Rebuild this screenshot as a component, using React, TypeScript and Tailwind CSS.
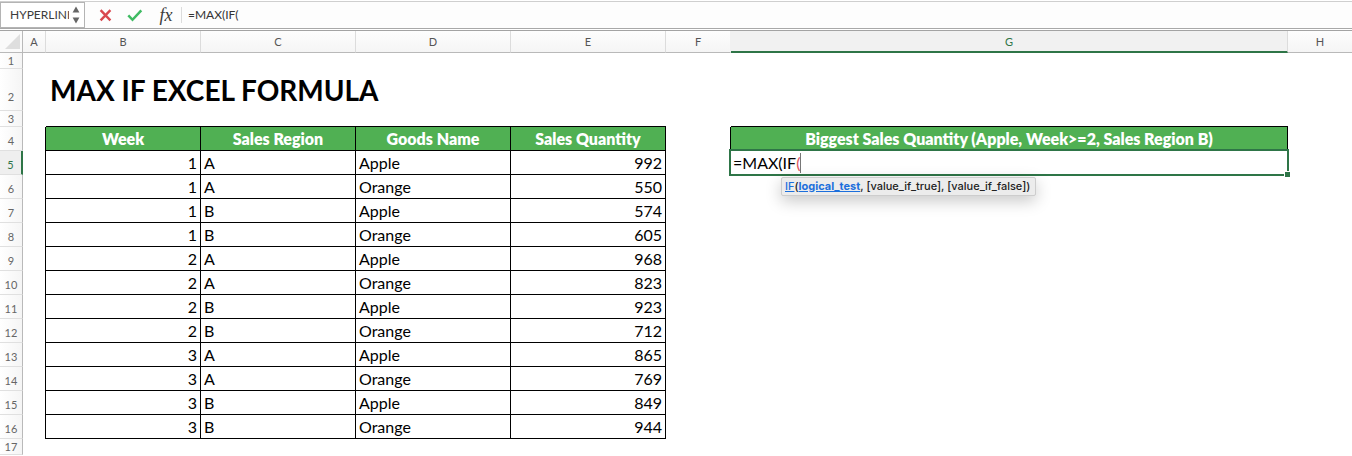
import type { ReactNode } from "react";

const columns = ["A", "B", "C", "D", "E", "F", "G", "H"];

const headings = ["Week", "Sales Region", "Goods Name", "Sales Quantity"];

const sales: [number, string, string, number][] = [
  [1, "A", "Apple", 992],
  [1, "A", "Orange", 550],
  [1, "B", "Apple", 574],
  [1, "B", "Orange", 605],
  [2, "A", "Apple", 968],
  [2, "A", "Orange", 823],
  [2, "B", "Apple", 923],
  [2, "B", "Orange", 712],
  [3, "A", "Apple", 865],
  [3, "A", "Orange", 769],
  [3, "B", "Apple", 849],
  [3, "B", "Orange", 944],
];

const lined = "border-r border-b border-black";
const headingCell = `${lined} bg-[#50b053] p-0 text-center text-base leading-5 font-extrabold whitespace-nowrap text-white`;

function columnStyle(name: string) {
  if (name === "G") return "border-r border-b-2 border-r-[#dcdcdc] border-b-[#2e7547] bg-[#f1f1f1] pt-px text-[#2e7547]";
  const base = "border-b border-b-[#b9b9b9] bg-linear-to-b from-[#fdfdfd] to-[#f5f5f5] text-[#555]";
  if (name === "F") return `${base} border-r border-r-[#f1f1f1]`;
  if (name === "H") return base;
  return `${base} border-r border-r-[#dcdcdc]`;
}

function FormulaBar() {
  return (
    <div className="flex h-[31px] flex-col border-b border-[#a3a3a3]">
      <div className="mt-px flex h-7 items-stretch border-t border-b border-t-[#cfcfcf] border-b-[#a8a8a8] bg-[#fdfdfd]">
        <div className="flex w-[85px] items-center border border-[#b4b4b4] bg-white pl-[9px]">
          <input
            aria-label="Name box"
            defaultValue="HYPERLINK"
            className="w-[59px] bg-transparent text-xs text-[#3c3c3c] outline-none"
          />
          <span className="ml-[3px] flex flex-col gap-1">
            <button aria-label="Previous name" className="block">
              <svg width="8" height="7" viewBox="0 0 8 7" className="block">
                <path d="M4 0.5 7.4 6.5H0.6Z" fill="#666" />
              </svg>
            </button>
            <button aria-label="Next name" className="block">
              <svg width="8" height="7" viewBox="0 0 8 7" className="block">
                <path d="M4 6.5 7.4 0.5H0.6Z" fill="#666" />
              </svg>
            </button>
          </span>
        </div>
        <div className="flex items-center pl-3.5">
          <button aria-label="Cancel">
            <svg width="14" height="14" viewBox="0 0 14 14" className="block">
              <path d="M1.6 2.2 11.4 12.4M11.4 2.2 1.6 12.4" stroke="#d9484f" strokeWidth="2.4" fill="none" />
            </svg>
          </button>
          <button aria-label="Enter" className="ml-3.5">
            <svg width="16" height="14" viewBox="0 0 16 14" className="block">
              <path d="M1.3 7.4 5.5 11.8 14.3 2.3" stroke="#3fbb63" strokeWidth="2.5" fill="none" />
            </svg>
          </button>
          <button
            aria-label="Insert function"
            className="ml-[13px] w-5 text-center font-['Liberation_Serif',serif] text-lg leading-5 text-[#3c3c3c] italic"
          >
            fx
          </button>
          <span className="ml-[5px] h-4 w-px bg-[#dcdcdc]" />
        </div>
        <input
          aria-label="Formula"
          defaultValue="=MAX(IF("
          className="min-w-0 flex-1 bg-transparent pl-1.5 text-xs text-[#333] outline-none"
        />
      </div>
    </div>
  );
}

function RowHeader({ n, pad, active }: { n: number; pad: string; active?: boolean }) {
  return (
    <th
      scope="row"
      className={`border-b border-b-[#e0e0e0] p-0 text-center align-bottom text-[11px] leading-3 font-normal ${pad} ${
        active
          ? "border-r-2 border-r-[#2e7547] bg-[#efefef] text-[#2e7547]"
          : "border-r border-r-[#b9b9b9] bg-linear-to-r from-white to-[#f5f5f5] text-[#666]"
      }`}
    >
      {n}
    </th>
  );
}

function BlankRow({ n, height, pad, children }: { n: number; height: string; pad: string; children?: ReactNode }) {
  return (
    <tr className={height}>
      <RowHeader n={n} pad={pad} />
      {children ?? <td colSpan={8} className="p-0" />}
    </tr>
  );
}

function ActiveCell() {
  return (
    <div className="relative h-6">
      <div className="absolute -top-0.5 -right-px -bottom-px -left-0.5 flex items-center border-2 border-[#2e7547] bg-white pl-[2px] text-base leading-5 whitespace-nowrap">
        =MAX(IF<span className="text-[#e0555c]">(</span>
        <span className="h-5 w-px bg-[#777]" />
      </div>
      <span className="absolute -right-0.5 -bottom-0.5 size-[6px] border-t border-l border-white bg-[#2e7547]" />
      <div
        role="tooltip"
        className="absolute top-[26px] left-[50px] z-10 flex h-[19px] items-center rounded-xs border border-[#cdcdcd] bg-[#ececec] pr-[5px] pb-px pl-[3px] font-[Inter,sans-serif] text-[11px] leading-4 font-medium whitespace-nowrap text-[#222] shadow-[0_5px_16px_rgba(0,0,0,0.22)]"
      >
        <a href="#if" className="text-[#1c6fdc] underline">
          IF
        </a>
        (
        <a href="#logical-test" className="font-bold text-[#1c6fdc] underline">
          logical_test
        </a>
        , [value_if_true], [value_if_false])
      </div>
    </div>
  );
}

export default function App() {
  return (
    <div className="min-h-screen overflow-hidden bg-white font-[Lato,sans-serif] text-black">
      <FormulaBar />
      <table className="w-full table-fixed border-separate border-spacing-0">
        <colgroup>
          <col className="w-[23px]" />
          <col className="w-[23px]" />
          <col className="w-[155px]" />
          <col className="w-[155px]" />
          <col className="w-[155px]" />
          <col className="w-[155px]" />
          <col className="w-[65px]" />
          <col className="w-[557px]" />
          <col />
        </colgroup>
        <thead>
          <tr className="h-[22px]">
            <td className="border-r border-b border-[#b9b9b9] bg-[#fafafa] p-0">
              <svg width="15" height="15" viewBox="0 0 15 15" className="ml-[5px] block">
                <path d="M15 0V15H0Z" fill="#dedede" />
              </svg>
            </td>
            {columns.map((c) => (
              <th
                key={c}
                scope="col"
                className={`p-0 text-center text-[11px] leading-4 font-normal ${columnStyle(c)}`}
              >
                {c}
              </th>
            ))}
          </tr>
        </thead>
        <tbody>
          <BlankRow n={1} height="h-4" pad="pb-px" />
          <BlankRow n={2} height="h-[42px]" pad="pb-[7px]">
            <td className="p-0" />
            <td colSpan={7} className="p-0 pl-1 align-middle">
              <h1 className="text-[28px] leading-9 font-bold">MAX IF EXCEL FORMULA</h1>
            </td>
          </BlankRow>
          <BlankRow n={3} height="h-4" pad="pb-px">
            <td className="border-r border-transparent p-0" />
            <td colSpan={4} className="border-b border-black p-0" />
            <td className="p-0" />
            <td className="border-b border-black p-0" />
            <td className="p-0" />
          </BlankRow>
          <tr className="h-6">
            <RowHeader n={4} pad="pb-[3px]" />
            <td className="border-r border-black p-0" />
            {headings.map((h) => (
              <th key={h} scope="col" className={headingCell}>
                {h}
              </th>
            ))}
            <td className="border-r border-black p-0" />
            <th scope="col" className={headingCell}>
              Biggest Sales Quantity (Apple, Week&gt;=2, Sales Region B)
            </th>
            <td className="p-0" />
          </tr>
          {sales.map(([week, region, goods, quantity], i) => (
            <tr key={i} className="h-6 text-base leading-5">
              <RowHeader n={i + 5} pad="pb-[3px]" active={i === 0} />
              <td className="border-r border-black p-0" />
              <td className={`${lined} p-0 pr-[3px] text-right`}>{week}</td>
              <td className={`${lined} p-0 pl-[3px]`}>{region}</td>
              <td className={`${lined} p-0 pl-[3px]`}>{goods}</td>
              <td className={`${lined} p-0 pr-[3px] text-right`}>{quantity}</td>
              <td className="p-0" />
              <td className="p-0">{i === 0 && <ActiveCell />}</td>
              <td className="p-0" />
            </tr>
          ))}
          <BlankRow n={17} height="h-4" pad="pb-px" />
        </tbody>
      </table>
    </div>
  );
}
